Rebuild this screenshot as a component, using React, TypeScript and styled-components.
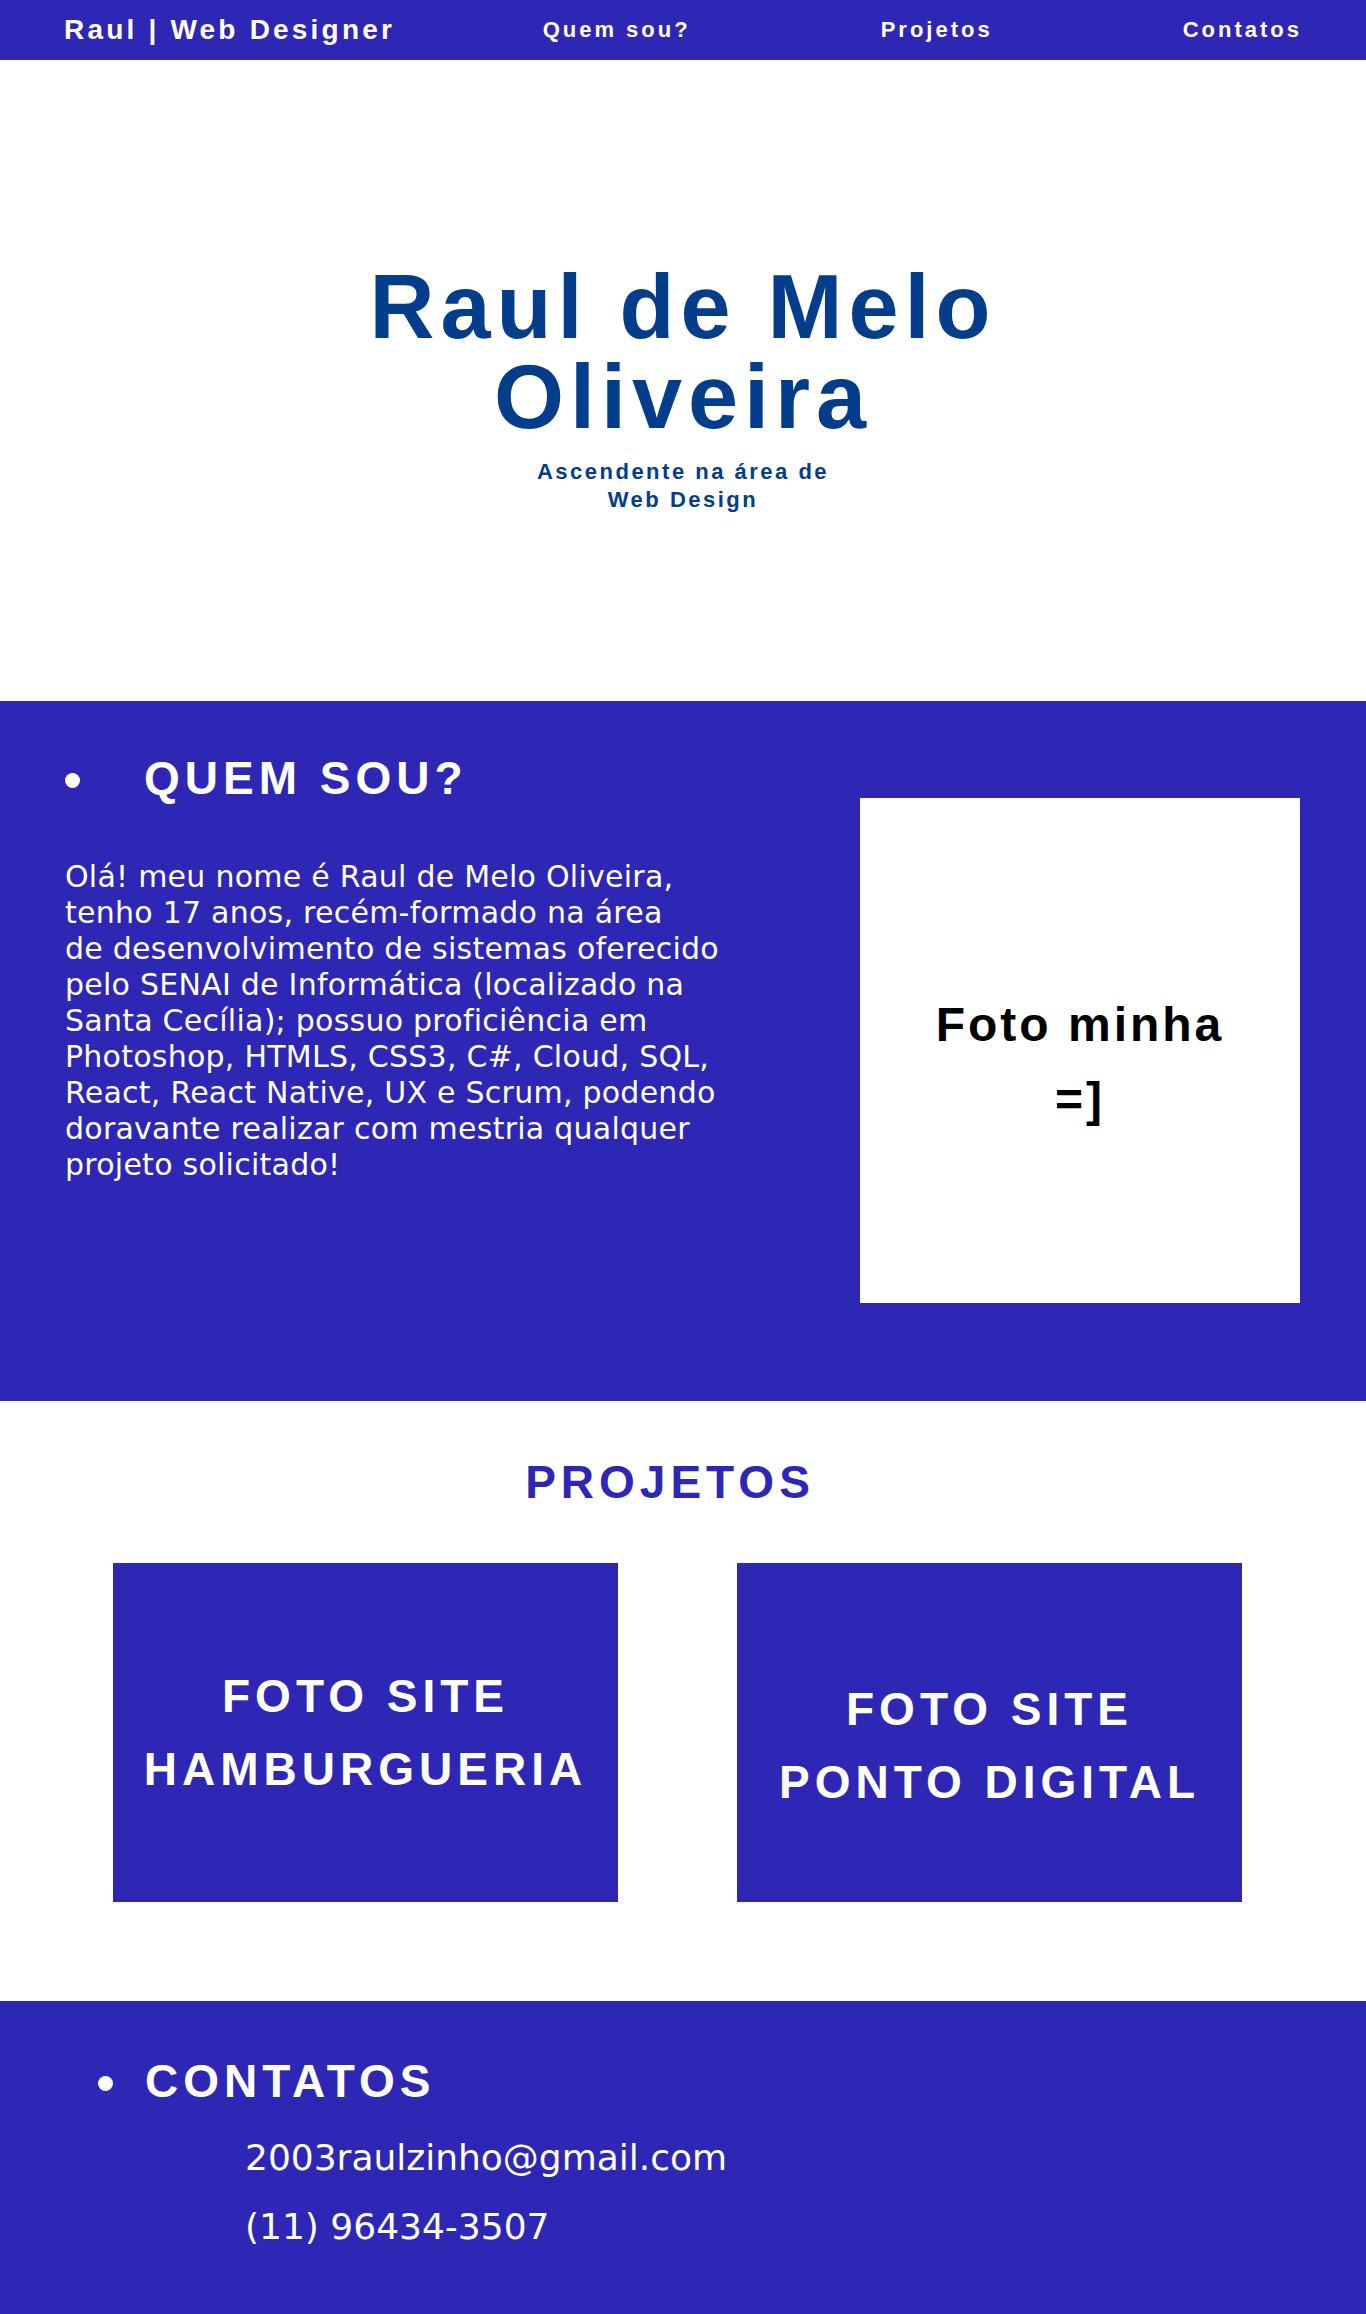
import React from "react";
import styled, { createGlobalStyle } from "styled-components";

const BLUE = "#2e26b5";
const NAVY = "#033d8c";

const GlobalStyle = createGlobalStyle`
  html, body { margin: 0; padding: 0; }
  body {
    font-family: "Liberation Sans", Arial, sans-serif;
    background: #ffffff;
  }
  * { box-sizing: border-box; }
`;

const NavBar = styled.header`
  height: 60px;
  background: ${BLUE};
  display: flex;
  align-items: center;
  padding: 0 64px 0 64px;
  color: #ffffff;
  font-weight: 700;
`;

const Logo = styled.div`
  font-size: 28px;
  letter-spacing: 3.2px;
  white-space: nowrap;
`;

const NavList = styled.nav`
  margin-left: auto;
  display: flex;
  gap: 190px;
`;

const NavLink = styled.a`
  font-size: 22px;
  letter-spacing: 3px;
  color: #ffffff;
  text-decoration: none;
  white-space: nowrap;
`;

const Hero = styled.section`
  padding: 202px 0 187px;
  text-align: center;
  color: ${NAVY};
`;

const HeroTitle = styled.h1`
  margin: 0 auto;
  max-width: 700px;
  font-size: 90px;
  line-height: 90px;
  letter-spacing: 6px;
  font-weight: 700;
`;

const HeroSubtitle = styled.p`
  margin: 16px auto 0;
  max-width: 320px;
  font-size: 22px;
  line-height: 28px;
  letter-spacing: 2.5px;
  font-weight: 700;
`;

const About = styled.section`
  background: ${BLUE};
  display: flex;
  justify-content: space-between;
  align-items: flex-start;
  padding: 51px 66px 98px 65px;
`;

const AboutText = styled.div`
  display: flex;
  flex-direction: column;
`;

const HeadingRow = styled.div<{ $gap: number }>`
  display: flex;
  align-items: center;
  gap: ${(p) => p.$gap}px;
  color: #ffffff;
`;

const Dot = styled.span`
  width: 15px;
  height: 15px;
  border-radius: 50%;
  background: #ffffff;
  flex: none;
  margin-top: 4px;
`;

const SectionTitle = styled.h2<{ $color?: string }>`
  margin: 0;
  font-size: 46px;
  line-height: 53px;
  letter-spacing: 5px;
  font-weight: 700;
  color: ${(p) => p.$color || "#ffffff"};
`;

const Paragraph = styled.p`
  margin: 54px 0 0;
  width: 700px;
  font-family: "DejaVu Sans", Verdana, sans-serif;
  font-size: 30px;
  line-height: 36px;
  letter-spacing: 0.25px;
  color: #ffffff;
  white-space: nowrap;
`;

const Photo = styled.div`
  margin-top: 46px;
  width: 440px;
  height: 505px;
  background: #ffffff;
  display: flex;
  align-items: center;
  justify-content: center;
  text-align: center;
  padding: 22px 60px 0;
  font-size: 48px;
  line-height: 75px;
  letter-spacing: 3px;
  font-weight: 700;
  color: #000000;
`;

const Projects = styled.section`
  padding: 55px 0 99px;
  background: #ffffff;
`;

const ProjectsTitle = styled(SectionTitle)`
  text-align: center;
  padding-right: 26px;
`;

const CardRow = styled.div`
  margin-top: 54px;
  display: flex;
  justify-content: space-between;
  padding: 0 124px 0 113px;
`;

const Card = styled.div<{ $shift: number }>`
  width: 505px;
  height: 339px;
  background: ${BLUE};
  display: flex;
  align-items: center;
  justify-content: center;
  text-align: center;
  padding-top: ${(p) => p.$shift}px;
  color: #ffffff;
  font-size: 46px;
  line-height: 73px;
  letter-spacing: 5px;
  font-weight: 700;
`;

const Contacts = styled.section`
  background: ${BLUE};
  padding: 54px 0 54px 98px;
`;

const ContactList = styled.ul`
  list-style: none;
  margin: 15px 0 0;
  padding: 0 0 0 147px;
`;

const ContactItem = styled.li`
  font-family: "DejaVu Sans", Verdana, sans-serif;
  font-size: 36px;
  line-height: 69px;
  color: #ffffff;
`;

const aboutLines = [
  "Olá! meu nome é Raul de Melo Oliveira,",
  "tenho 17 anos, recém-formado na área",
  "de desenvolvimento de sistemas oferecido",
  "pelo SENAI de Informática (localizado na",
  "Santa Cecília); possuo proficiência em",
  "Photoshop, HTMLS, CSS3, C#, Cloud, SQL,",
  "React, React Native, UX e Scrum, podendo",
  "doravante realizar com mestria qualquer",
  "projeto solicitado!",
];

const projects = [
  { lines: ["FOTO SITE", "HAMBURGUERIA"], shift: 0 },
  { lines: ["FOTO SITE", "PONTO DIGITAL"], shift: 26 },
];

export default function App() {
  return (
    <>
      <GlobalStyle />
      <NavBar>
        <Logo>Raul | Web Designer</Logo>
        <NavList>
          <NavLink href="#quem">Quem sou?</NavLink>
          <NavLink href="#projetos">Projetos</NavLink>
          <NavLink href="#contatos">Contatos</NavLink>
        </NavList>
      </NavBar>

      <Hero>
        <HeroTitle>Raul de Melo Oliveira</HeroTitle>
        <HeroSubtitle>Ascendente na área de Web Design</HeroSubtitle>
      </Hero>

      <About id="quem">
        <AboutText>
          <HeadingRow $gap={64}>
            <Dot />
            <SectionTitle>QUEM SOU?</SectionTitle>
          </HeadingRow>
          <Paragraph>
            {aboutLines.map((l, i) => (
              <React.Fragment key={i}>
                {l}
                {i < aboutLines.length - 1 && <br />}
              </React.Fragment>
            ))}
          </Paragraph>
        </AboutText>
        <Photo>Foto minha =]</Photo>
      </About>

      <Projects id="projetos">
        <ProjectsTitle $color={BLUE}>PROJETOS</ProjectsTitle>
        <CardRow>
          {projects.map((p, i) => (
            <Card key={i} $shift={p.shift}>
              <div>
                {p.lines[0]}
                <br />
                {p.lines[1]}
              </div>
            </Card>
          ))}
        </CardRow>
      </Projects>

      <Contacts id="contatos">
        <HeadingRow $gap={32}>
          <Dot />
          <SectionTitle>CONTATOS</SectionTitle>
        </HeadingRow>
        <ContactList>
          <ContactItem>2003raulzinho@gmail.com</ContactItem>
          <ContactItem>(11) 96434-3507</ContactItem>
        </ContactList>
      </Contacts>
    </>
  );
}
